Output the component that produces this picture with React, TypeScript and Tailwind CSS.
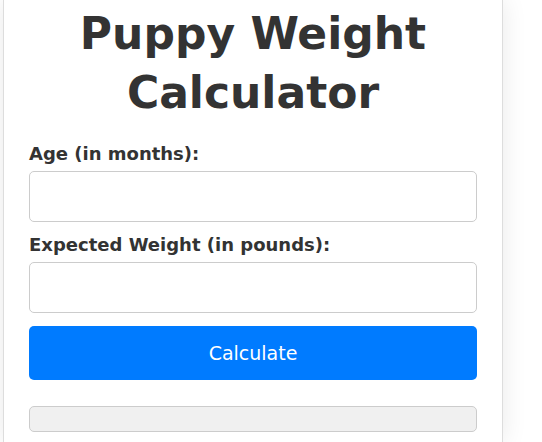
import React, { useState } from 'react';

const App: React.FC = () => {
  const [age, setAge] = useState('');
  const [weight, setWeight] = useState('');
  const [result, setResult] = useState('');

  const calculate = () => {
    const a = parseFloat(age);
    const w = parseFloat(weight);
    if (!a || !w) {
      setResult('');
      return;
    }
    setResult(`Estimated adult weight: ${((w / a) * 12).toFixed(1)} lbs`);
  };

  return (
    <div className="min-h-screen w-full bg-white font-['DejaVu_Sans',sans-serif] text-[#333]">
      <div className="ml-[3px] w-[500px] bg-white border border-[#ddd] border-t-0 shadow-[0_0_24px_rgba(0,0,0,0.09)] px-[25px] pb-[10px]">
        {/* Title */}
        <h1 className="text-center text-[44px] leading-[59px] font-bold pt-[4px] mb-[18px]">
          Puppy Weight
          <br />
          Calculator
        </h1>

        {/* Age */}
        <label className="block text-[18px] leading-[27px] font-bold mb-[4px]">Age (in months):</label>
        <input
          type="number"
          value={age}
          onChange={(e) => setAge(e.target.value)}
          className="block w-full h-[51px] rounded-[5px] border border-[#ccc] px-3 text-[16px] outline-none mb-[9px]"
        />

        {/* Expected weight */}
        <label className="block text-[18px] leading-[27px] font-bold mb-[4px]">Expected Weight (in pounds):</label>
        <input
          type="number"
          value={weight}
          onChange={(e) => setWeight(e.target.value)}
          className="block w-full h-[51px] rounded-[5px] border border-[#ccc] px-3 text-[16px] outline-none mb-[13px]"
        />

        <button
          onClick={calculate}
          className="block w-full h-[54px] rounded-[5px] bg-[#007bff] text-white text-[19px] cursor-pointer"
        >
          Calculate
        </button>

        {/* Result */}
        <div className="mt-[26px] min-h-[26px] rounded-[5px] border border-[#ccc] bg-[#f0f0f0] px-3 text-[16px]">
          {result}
        </div>
      </div>
    </div>
  );
};

export default App;
